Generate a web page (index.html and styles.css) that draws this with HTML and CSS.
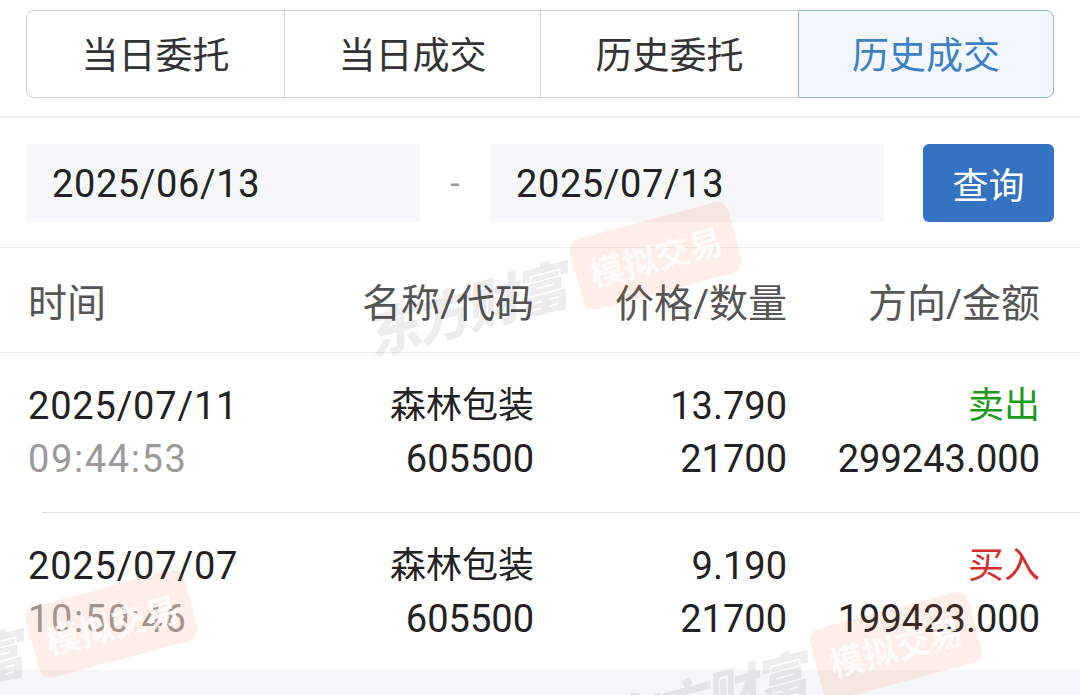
FILE: index.html
```html
<!DOCTYPE html>
<html lang="zh-CN">
<head>
<meta charset="utf-8">
<title>历史成交</title>
<link rel="stylesheet" href="styles.css">
</head>
<body>
<div class="page">
  <div class="tab-section">
    <div class="tabs">
      <div class="tab">当日委托</div>
      <div class="tab">当日成交</div>
      <div class="tab">历史委托</div>
      <div class="tab active">历史成交</div>
    </div>
  </div>

  <div class="date-row">
    <div class="date-input">2025/06/13</div>
    <div class="dash">-</div>
    <div class="date-input">2025/07/13</div>
    <button class="query-btn">查询</button>
  </div>

  <div class="grid head">
    <div class="c1">时间</div>
    <div class="cr">名称/代码</div>
    <div class="cr">价格/数量</div>
    <div class="cr">方向/金额</div>
  </div>

  <div class="grid trade">
    <div class="c1"><div class="main">2025/07/11</div><div class="sub">09:44:53</div></div>
    <div class="cr"><div class="main cn">森林包装</div><div class="main">605500</div></div>
    <div class="cr"><div class="main">13.790</div><div class="main">21700</div></div>
    <div class="cr"><div class="main cn sell">卖出</div><div class="main">299243.000</div></div>
  </div>
  <div class="divider"></div>
  <div class="grid trade last">
    <div class="c1"><div class="main">2025/07/07</div><div class="sub">10:50:46</div></div>
    <div class="cr"><div class="main cn">森林包装</div><div class="main">605500</div></div>
    <div class="cr"><div class="main">9.190</div><div class="main">21700</div></div>
    <div class="cr"><div class="main cn buy">买入</div><div class="main">199423.000</div></div>
  </div>
  <div class="footer"></div>

  <div class="wm wm1"><span class="wm-brand">东方财富</span><span class="wm-tag">模拟交易</span></div>
  <div class="wm wm2"><span class="wm-brand">东方财富</span><span class="wm-tag">模拟交易</span></div>
  <div class="wm wm3"><span class="wm-brand">东方财富</span><span class="wm-tag">模拟交易</span></div>
</div>
</body>
</html>
```

FILE: styles.css
```css
* { box-sizing: border-box; }
html, body { margin: 0; padding: 0; background: #fff; }
body {
  font-family: Roboto, "Noto Sans CJK SC", sans-serif;
  color: #222;
  width: 1080px;
  height: 695px;
  overflow: hidden;
}
.page { position: relative; width: 1080px; height: 695px; overflow: hidden; }

.tab-section {
  padding: 10px 26px 18px;
  border-bottom: 2px solid #f0f0f0;
}
.tabs {
  display: grid;
  grid-template-columns: 257px 256px 258px 1fr;
  height: 88px;
  border: 1px solid #cfcfcf;
  border-radius: 8px;
}
.tab {
  display: flex;
  align-items: center;
  justify-content: center;
  font-size: 37px;
  color: #333;
  border-left: 1px solid #d6d6d6;
  padding-bottom: 3px;
}
.tab:first-child { border-left: none; }
.tab.active {
  background: #f1f7fd;
  color: #3f7fc3;
  margin: -1px -1px -1px 0;
  border: 1px solid #9ab7d3;
  border-radius: 0 8px 8px 0;
}

.date-row {
  display: flex;
  align-items: center;
  padding: 26px 26px 25px;
  border-bottom: 1px solid #eeeeee;
}
.date-input {
  width: 394px;
  height: 78px;
  background: #f6f7f9;
  display: flex;
  align-items: center;
  padding-left: 26px;
  padding-top: 2px;
  font-size: 38px;
  letter-spacing: 0.6px;
  color: #222;
}
.dash {
  width: 70px;
  text-align: center;
  color: #999;
  font-size: 34px;
}
.query-btn {
  margin-left: 39px;
  width: 131px;
  height: 78px;
  border: none;
  border-radius: 6px;
  background: #3373c1;
  color: #fff;
  font-family: "Noto Sans CJK SC", sans-serif;
  font-size: 36px;
  padding: 0;
}

.grid {
  display: grid;
  grid-template-columns: 253px 253px 253px 253px;
  padding: 0 40px 0 28px;
}
.head {
  height: 105px;
  align-items: center;
  border-bottom: 1px solid #eeeeee;
  color: #555;
  font-size: 39px;
}
.cr { text-align: right; }
.trade {
  padding-top: 27px;
  padding-bottom: 26px;
  font-size: 38px;
}
.trade.last { padding-bottom: 24px; }
.main, .sub { line-height: 53px; height: 53px; white-space: nowrap; }
.main.cn { font-size: 36px; }
.c1 .main, .c1 .sub { letter-spacing: 0.8px; }
.c1 .sub { letter-spacing: 1.6px; }
.sub { color: #9a9a9a; }
.sell { color: #1c9a1c; }
.buy { color: #d23030; }
.divider {
  height: 1px;
  margin-left: 42px;
  background: #e2e2e2;
}
.footer {
  height: 40px;
  background: #f5f6f8;
}

.wm {
  position: absolute;
  display: flex;
  align-items: center;
  gap: 14px;
  transform: rotate(-15deg);
  transform-origin: 0 50%;
  pointer-events: none;
  white-space: nowrap;
}
.wm-brand {
  font-family: "Noto Sans CJK SC", sans-serif;
  font-weight: 900;
  font-style: italic;
  font-size: 54px;
  color: rgba(0, 0, 0, 0.07);
  letter-spacing: -3px;
}
.wm-tag {
  font-family: "Noto Sans CJK SC", sans-serif;
  font-weight: 700;
  font-size: 34px;
  color: rgba(255, 255, 255, 0.85);
  background: rgba(242, 100, 55, 0.11);
  border-radius: 12px;
  padding: 12px 14px;
}
.wm1 { left: 366px; top: 294px; }
.wm2 { left: -178px; top: 662px; }
.wm3 { left: 606px; top: 684px; }
```
